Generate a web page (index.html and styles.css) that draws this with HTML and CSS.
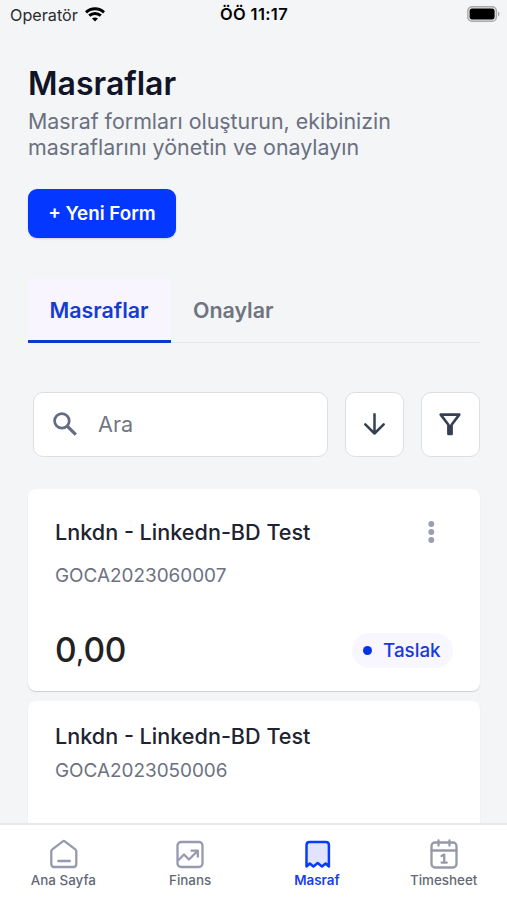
FILE: index.html
```html
<!DOCTYPE html>
<html lang="tr">
<head>
<meta charset="utf-8">
<meta name="viewport" content="width=device-width, initial-scale=1">
<title>Masraflar</title>
<link rel="stylesheet" href="styles.css">
</head>
<body>
<div class="app">
  <header class="status">
    <div class="carrier"><span class="carrier-name">Operatör</span>
      <svg class="wifi" width="20" height="15" viewBox="0 0 20 15" fill="none" stroke="#000" stroke-width="3"><path d="M1 5.300C6 .6 14 .6 19 5.300M4.200 8.700c3.300-3 8.300-3 11.600 0"/><path d="M10 14.600l-3-3.100c1.700-1.500 4.300-1.500 6 0z" fill="#000" stroke="none"/></svg>
    </div>
    <div class="clock">ÖÖ 11:17</div>
    <svg class="battery" width="33" height="16" viewBox="0 0 33 16"><rect x=".8" y=".8" width="28.600" height="14.400" rx="4.300" fill="#e6e7e8" stroke="#a9abad" stroke-width="1.400"/><rect x="2.600" y="2.600" width="25" height="10.800" rx="2.600"/><path d="M31 5.500c2 .8 2 4.200 0 5z" fill="#a9abad"/></svg>
  </header>

  <main class="content">
    <h1 class="title">Masraflar</h1>
    <p class="subtitle">Masraf formları oluşturun, ekibinizin<br>masraflarını yönetin ve onaylayın</p>
    <button class="new-form">+ Yeni Form</button>

    <div class="tabs">
      <div class="tab tab-active"><span>Masraflar</span></div>
      <div class="tab"><span>Onaylar</span></div>
    </div>

    <div class="tools">
      <div class="search">
        <svg width="26" height="26" viewBox="0 0 26 26" fill="none" stroke="#646b84" stroke-width="2.700"><circle cx="9.900" cy="9.900" r="7.300"/><path d="M15.200 15.200l8.600 8.500" stroke-width="3.200"/></svg>
        <span class="placeholder">Ara</span>
      </div>
      <button class="tool" aria-label="Sırala"><svg width="24" height="24" viewBox="0 0 24 24" fill="none" stroke="#344054" stroke-width="2.500" stroke-linecap="round" stroke-linejoin="round"><path d="M12.500 2.300v19.200M3.300 12.300l9.200 9.200 9.200-9.200"/></svg></button>
      <button class="tool" aria-label="Filtrele"><svg width="24" height="24" viewBox="0 0 24 24" fill="none" stroke="#344054" stroke-width="2.600" stroke-linejoin="round"><path d="M2.700 2.600h18.600L13.600 12.800v9.200h-3.200v-9.200z"/><path d="M12 13v9" stroke-width="3"/></svg></button>
    </div>

    <section class="card">
      <div class="card-head"><h2 class="card-title">Lnkdn - Linkedn-BD Test</h2>
        <svg class="more" width="8" height="24" viewBox="0 0 8 24" fill="#9a9db2"><circle cx="4.300" cy="4" r="2.900"/><circle cx="4.300" cy="12" r="2.900"/><circle cx="4.300" cy="20" r="2.900"/></svg>
      </div>
      <div class="code code-spaced">GOCA2023060007</div>
      <div class="card-foot"><div class="amount">0<span class="comma">,</span>00</div><div class="badge"><i class="dot"></i><span>Taslak</span></div></div>
    </section>
    <section class="card card-next">
      <h2 class="card-title">Lnkdn - Linkedn-BD Test</h2>
      <div class="code">GOCA2023050006</div>
    </section>
  </main>

  <nav class="nav">
    <a class="nav-item">
      <svg width="30" height="30" viewBox="0 0 30 30" fill="none" stroke="#9699b1" stroke-width="2.300" stroke-linejoin="round" stroke-linecap="round"><path d="M3.300 12.300q0-1.200 1-1.900L14.800 2.400q1-.8 2 0l10.500 8q1 .7 1 1.900v12.700q0 3-3 3h-19q-3 0-3-3z"/><path d="M10.300 22h11.500"/></svg>
      <span>Ana Sayfa</span></a>
    <a class="nav-item">
      <svg width="30" height="30" viewBox="0 0 30 30" fill="none" stroke="#9699b1" stroke-width="2.300" stroke-linejoin="round" stroke-linecap="round"><rect x="2.500" y="3" width="25" height="25" rx="3.500"/><path d="M3.500 21l5.500-5.500 5 5L22.500 12M16.500 11.700h6.300v6"/></svg>
      <span>Finans</span></a>
    <a class="nav-item nav-active">
      <svg width="30" height="30" viewBox="0 0 30 30" fill="#e2e4ff" stroke="#073cff" stroke-width="2.500" stroke-linejoin="round"><path d="M4.500 27.500V6q0-3 3-3h16.400q3 0 3 3v21.500l-3.300-3-3.600 3-4.300-3.400-4.300 3.400-3.600-3z"/></svg>
      <span>Masraf</span></a>
    <a class="nav-item">
      <svg width="30" height="32" viewBox="0 0 30 32" fill="none" stroke="#9699a8" stroke-width="2.300" stroke-linecap="round" stroke-linejoin="round"><rect x="2.500" y="4.500" width="25" height="25" rx="3.500"/><path d="M2.500 12.500h25M9.500 2.500v5M20.500 2.500v5M12.500 18l2.700-1.400v8M12.600 24.600h5.200"/></svg>
      <span>Timesheet</span></a>
  </nav>
</div>
</body>
</html>
```
FILE: styles.css
```css
* { box-sizing: border-box; }
body { margin: 0; background: #f3f5f7; font-family: Inter, "Liberation Sans", sans-serif; }
h1, h2, p { margin: 0; }
button { font-family: inherit; margin: 0; padding: 0; }
svg { display: block; flex: none; }
.app { width: 507px; height: 900px; display: flex; flex-direction: column; overflow: hidden; }

.status { height: 30px; flex: none; display: grid; grid-template-columns: 1fr auto 1fr; padding: 0 7px 0 10px; line-height: 29px; color: #000; }
.carrier { display: flex; align-items: center; gap: 7px; font-size: 16.2px; color: #2b2c2e; }
.wifi { margin-top: -2px; }
.clock { font-size: 16.5px; font-weight: 600; letter-spacing: .35px; margin-left: -2px; }
.battery { justify-self: end; margin-top: 6px; }

.content { flex: 1; min-height: 0; padding: 34px 27px 0 28px; overflow: hidden; }
.title { font-size: 32px; line-height: 40px; font-weight: 600; color: #101426; }
.subtitle { margin-top: 4px; font-size: 21.4px; line-height: 26px; color: #6b7080; white-space: nowrap; }
.new-form { display: block; margin-top: 29px; width: 148px; height: 49px; border: 0; border-radius: 9px; background: #0437ff; color: #fff; font-size: 18.8px; font-weight: 600; box-shadow: 0 1px 2px #10182826; }

.tabs { display: flex; margin-top: 41px; height: 64px; border-bottom: 1px solid #e8eaee; }
.tab { height: 64px; padding: 0 22px; line-height: 63px; font-size: 21.4px; font-weight: 600; color: #70747f; }
.tab-active { width: 143px; padding: 0 21.5px; background: #f9f5ff; color: #143dce; border-bottom: 3px solid #0b3bcc; }

.tools { display: flex; gap: 17px; margin: 49px 0 0 5px; }
.search, .tool { height: 65px; background: #fff; border: 1.5px solid #dcdfe3; border-radius: 10px; padding-bottom: 2px; }
.search { width: 295px; display: flex; align-items: center; gap: 20px; padding-left: 18px; }
.placeholder { font-size: 21.6px; color: #737784; }
.tool { width: 59px; display: flex; align-items: center; justify-content: center; padding-right: 1px; }

.card { margin-top: 32px; height: 202px; padding: 27px 27px 0; background: #fff; border-radius: 8px; box-shadow: 0 1px 1px #1018282b; }
.card-head { display: flex; justify-content: space-between; padding-right: 18px; }
.card-title { font-size: 21.6px; line-height: 32px; font-weight: 500; color: #202331; white-space: nowrap; }
.more { margin-top: 4px; }
.code { font-size: 18.9px; line-height: 26px; color: #6c7280; margin-top: 6px; }
.code-spaced { margin-top: 15px; }
.card-foot { display: flex; justify-content: space-between; align-items: center; height: 44px; margin-top: 39px; }
.amount { padding-top: 2px; font-size: 33.5px; font-weight: 550; line-height: 44px; letter-spacing: -.4px; color: #222; }
.comma { font-size: 25px; font-weight: 500; }
.badge { width: 101px; height: 35px; border-radius: 18px; background: #f8f6ff; color: #183bdb; display: flex; align-items: center; gap: 11px; padding-left: 11px; font-size: 18.8px; font-weight: 500; }
.dot { width: 9px; height: 9px; border-radius: 50%; background: #0632e5; }
.card-next { margin-top: 10px; padding-top: 19px; }

.nav { height: 77px; flex: none; display: grid; grid-template-columns: repeat(4, 1fr); border-top: 2px solid #e6e8ea; background: #fff; }
.nav-item { display: flex; flex-direction: column; align-items: center; padding-top: 13px; font-size: 13.4px; font-weight: 500; line-height: 18px; color: #646977; }
.nav-item svg { height: 32px; }
.nav-item span { margin-top: 1px; }
.nav-active { color: #183cf0; font-weight: 600; }
```
